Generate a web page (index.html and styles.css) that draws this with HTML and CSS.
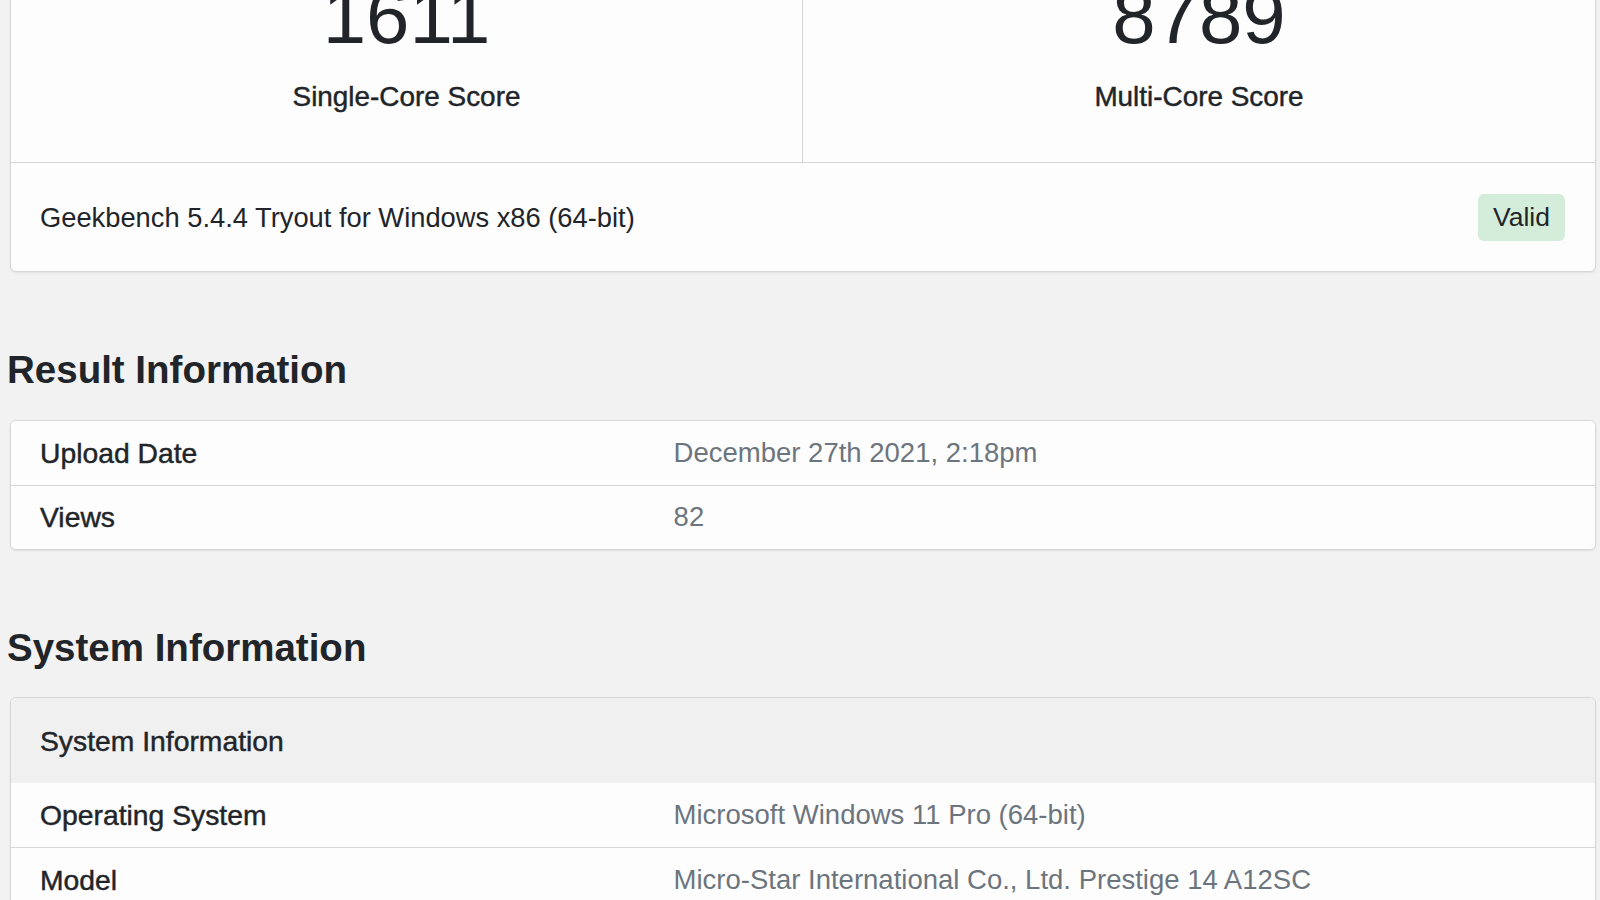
FILE: index.html
```html
<!DOCTYPE html>
<html lang="en">
<head>
<meta charset="utf-8">
<title>Geekbench Result</title>
<link rel="stylesheet" href="styles.css">
</head>
<body>
<div class="page">
  <section class="card score-card">
    <div class="scores">
      <div class="score">
        <div class="score-value">1611</div>
        <div class="score-label">Single-Core Score</div>
      </div>
      <div class="score">
        <div class="score-value">8789</div>
        <div class="score-label">Multi-Core Score</div>
      </div>
    </div>
    <div class="version-row">
      <span class="version">Geekbench 5.4.4 Tryout for Windows x86 (64-bit)</span>
      <span class="badge">Valid</span>
    </div>
  </section>

  <h2 class="section-title">Result Information</h2>
  <section class="card info-table">
    <div class="row">
      <div class="name">Upload Date</div>
      <div class="value">December 27th 2021, 2:18pm</div>
    </div>
    <div class="row">
      <div class="name">Views</div>
      <div class="value">82</div>
    </div>
  </section>

  <h2 class="section-title">System Information</h2>
  <section class="card info-table">
    <div class="row head">
      <div class="name">System Information</div>
    </div>
    <div class="row first">
      <div class="name">Operating System</div>
      <div class="value">Microsoft Windows 11 Pro (64-bit)</div>
    </div>
    <div class="row">
      <div class="name">Model</div>
      <div class="value">Micro-Star International Co., Ltd. Prestige 14 A12SC</div>
    </div>
    <div class="row">
      <div class="name">Motherboard</div>
      <div class="value">Micro-Star International Co., Ltd. MS-14C4</div>
    </div>
  </section>
</div>
</body>
</html>
```

FILE: styles.css
```css
html, body {
  margin: 0;
  padding: 0;
  background: #f2f2f2;
}

body {
  font-family: "Liberation Sans", Arial, Helvetica, sans-serif;
  color: #212529;
  overflow: hidden;
}

.page {
  margin-top: -40px;
  padding: 0 4px 40px 10px;
}

.card {
  background: #fdfdfd;
  border: 1px solid #d6d6d6;
  border-radius: 6px;
  box-shadow: 0 1px 2px rgba(0, 0, 0, 0.08);
  overflow: hidden;
}

.scores {
  display: grid;
  grid-template-columns: 1fr 1fr;
}

.score {
  display: flex;
  flex-direction: column;
  align-items: center;
  padding: 16px 0 49px;
}

.score:first-child {
  border-right: 1px solid #d6d6d6;
}

.score-value {
  font-size: 78px;
  line-height: 78px;
  font-weight: 400;
  color: #212529;
}

.score-label {
  margin-top: 26px;
  font-size: 27.9px;
  line-height: 32px;
  font-weight: 400;
  -webkit-text-stroke: 0.45px currentColor;
}

.version-row {
  display: flex;
  align-items: center;
  justify-content: space-between;
  border-top: 1px solid #d6d6d6;
  padding: 31px 30px 30px 29px;
}

.version {
  font-size: 27.3px;
  line-height: 32px;
}

.badge {
  display: inline-block;
  height: 47px;
  line-height: 47px;
  padding: 0 15px;
  border-radius: 6px;
  background: #d4edda;
  color: #212529;
  font-size: 26.5px;
}

.section-title {
  margin: 75px 0 27px -3px;
  font-size: 38.5px;
  line-height: 45.6px;
  font-weight: 700;
  color: #212529;
}

.info-table .row {
  display: grid;
  grid-template-columns: 40% 60%;
  align-items: center;
  height: 63px;
  border-top: 1px solid #d6d6d6;
  background: #fdfdfd;
}

.info-table .row:first-child {
  border-top: none;
  height: 64px;
}

.info-table .row.head {
  height: 85px;
  background: #f0f0f0;
}

.info-table .row.first {
  border-top: none;
  height: 64px;
}

.name {
  padding: 0 29px;
  font-size: 28.3px;
  line-height: 32px;
  font-weight: 400;
  -webkit-text-stroke: 0.45px currentColor;
  color: #212529;
}

.value {
  padding: 0 29px;
  font-size: 27.5px;
  line-height: 32px;
  color: #6c757d;
}
```
